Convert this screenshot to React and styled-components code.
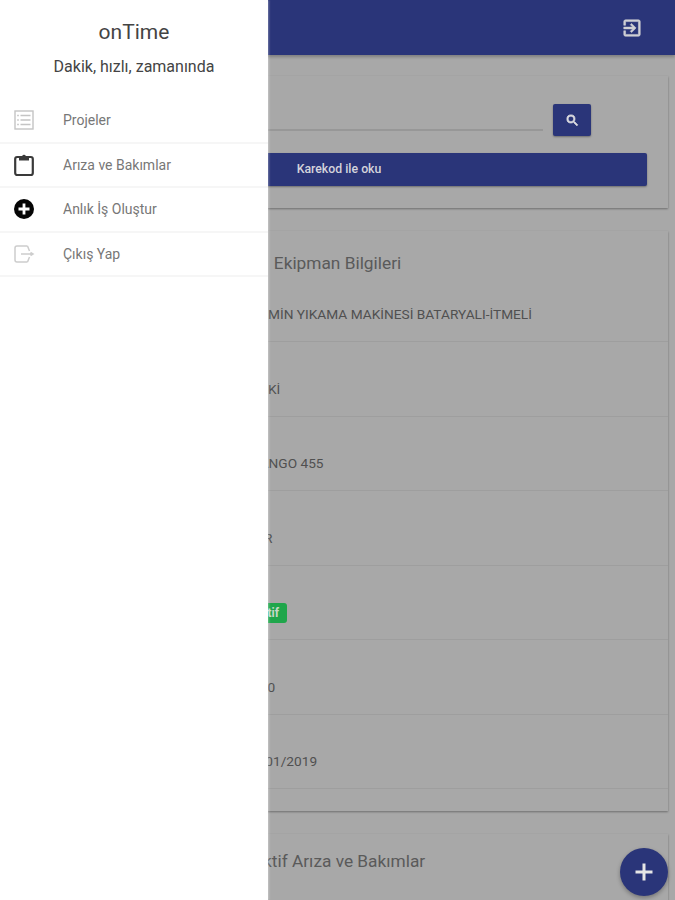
import React from 'react';
import styled, { createGlobalStyle } from 'styled-components';

const GlobalStyle = createGlobalStyle`
    html, body {
        margin: 0;
        padding: 0;
        background: #a8a8a8;
        font-family: Roboto, "Liberation Sans", sans-serif;
    }
`

const menuItems = [
    { label: 'Projeler', icon: 'list' },
    { label: 'Arıza ve Bakımlar', icon: 'clipboard' },
    { label: 'Anlık İş Oluştur', icon: 'add' },
    { label: 'Çıkış Yap', icon: 'exit' }
]

const equipmentRows = [
    { value: 'ZEMİN YIKAMA MAKİNESİ BATARYALI-İTMELİ' },
    { value: 'TEKİ' },
    { value: 'TANGO 455' },
    { value: 'MR' },
    { badge: 'Aktif' },
    { value: '200' },
    { value: '1/01/2019' }
]

const MenuIcon = ({ name }) => {
    if (name === 'list') {
        return (<svg width="22" height="22" viewBox="0 0 22 22" fill="none" stroke="#c4c4c4" strokeWidth="1.4">
            <rect x="2" y="2" width="18" height="18" />
            <path d="M7.5 6.5h10M7.5 11h10M7.5 15.5h10M4.2 6.5h1.6M4.2 11h1.6M4.2 15.5h1.6" />
        </svg>)
    }
    if (name === 'clipboard') {
        return (<svg width="22" height="24" viewBox="0 0 22 24" fill="none">
            <rect x="2.2" y="4" width="17.6" height="18" rx="2" stroke="#3a3a3a" strokeWidth="2.2" />
            <path d="M6 3h3.2a1.9 1.9 0 0 1 3.6 0H16v4.5H6z" fill="#3a3a3a" />
        </svg>)
    }
    if (name === 'add') {
        return (<svg width="22" height="22" viewBox="0 0 22 22">
            <circle cx="11" cy="11" r="10" fill="#050505" />
            <path d="M5.5 11h11M11 5.5v11" stroke="#fff" strokeWidth="2.8" />
        </svg>)
    }
    return (<svg width="22" height="22" viewBox="0 0 22 22" fill="none" stroke="#cdcdcd" strokeWidth="1.5">
        <path d="M14.5 3H4a2 2 0 0 0-2 2v12a2 2 0 0 0 2 2h10.5" />
        <path d="M14.5 3l2 5M14.5 19l2-5M8 11h11M17.5 9.5l2.5 1.5-2.5 1.5" />
    </svg>)
}

const App = () => {
    return (<Page>
        <GlobalStyle />
        <Header>
            <HeaderButton>
                <svg width="22" height="22" viewBox="0 0 24 24" fill="#d0d0d4" stroke="#d0d0d4" strokeWidth="0.6">
                    <path d="M10.09 15.59L11.5 17l5-5-5-5-1.41 1.41L12.67 11H3v2h9.67l-2.58 2.59zM19 3H5c-1.11 0-2 .9-2 2v4h2V5h14v14H5v-4H3v4c0 1.1.89 2 2 2h14c1.1 0 2-.9 2-2V5c0-1.1-.9-2-2-2z" />
                </svg>
            </HeaderButton>
        </Header>

        <Content>
            <SearchCard>
                <SearchRow>
                    <SearchInput />
                    <SearchButton>
                        <svg width="15" height="15" viewBox="0 0 24 24" fill="#dcdce0" stroke="#dcdce0" strokeWidth="1.2">
                            <path d="M15.5 14h-.79l-.28-.27A6.47 6.47 0 0 0 16 9.5 6.5 6.5 0 1 0 9.5 16c1.61 0 3.09-.59 4.23-1.57l.27.28v.79l5 4.99L20.49 19l-4.99-5zm-6 0C7.01 14 5 11.99 5 9.5S7.01 5 9.5 5 14 7.01 14 9.5 11.99 14 9.5 14z" />
                        </svg>
                    </SearchButton>
                </SearchRow>
                <QrButton>Karekod ile oku</QrButton>
            </SearchCard>

            <InfoCard>
                <CardTitle>Ekipman Bilgileri</CardTitle>
                {equipmentRows.map((row, i) => (<InfoRow key={i}>
                    {row.badge ? <Badge>{row.badge}</Badge> : row.value}
                </InfoRow>))}
            </InfoCard>

            <FaultCard>
                <FaultTitle>Aktif Arıza ve Bakımlar</FaultTitle>
            </FaultCard>
        </Content>

        <Fab>
            <svg width="24" height="24" viewBox="0 0 24 24">
                <path d="M12 3.5v17M3.5 12h17" stroke="#e6e6e6" strokeWidth="3" />
            </svg>
        </Fab>

        <Drawer>
            <DrawerTitle>onTime</DrawerTitle>
            <DrawerSubtitle>Dakik, hızlı, zamanında</DrawerSubtitle>
            <Menu>
                {menuItems.map((item) => (<MenuItem key={item.label}>
                    <IconSlot><MenuIcon name={item.icon} /></IconSlot>
                    {item.label}
                </MenuItem>))}
            </Menu>
        </Drawer>
    </Page>);
}

export default App;

const Page = styled.div`
    position: relative;
    width: 675px;
    height: 900px;
    overflow: hidden;
    background: #a8a8a8;
`

const Header = styled.header`
    height: 55px;
    background: #2a3579;
    box-shadow: 0 2px 3px rgba(0, 0, 0, 0.25);
    display: flex;
    justify-content: flex-end;
    align-items: center;
    padding-right: 32px;
`

const HeaderButton = styled.div`
    display: flex;
    margin-top: 1px;
`

const Content = styled.main`
    padding: 21px 7px 0;
    display: flex;
    flex-direction: column;
    gap: 23px;
`

const Card = styled.section`
    background: #a8a8a8;
    box-shadow: 0 1px 2px rgba(0, 0, 0, 0.35);
`

const SearchCard = styled(Card)`
    padding: 28px 21px 22px 20px;
    display: flex;
    flex-direction: column;
    gap: 17px;
`

const SearchRow = styled.div`
    display: flex;
    align-items: flex-start;
    gap: 10px;
    padding-right: 56px;
`

const SearchInput = styled.div`
    flex: 1;
    height: 25px;
    border-bottom: 2px solid #979797;
`

const SearchButton = styled.div`
    width: 38px;
    height: 32px;
    background: #2a3579;
    border-radius: 2px;
    box-shadow: 0 1px 2px rgba(0, 0, 0, 0.35);
    display: flex;
    align-items: center;
    justify-content: center;
`

const QrButton = styled.div`
    height: 33px;
    padding-left: 4px;
    padding-bottom: 2px;
    box-sizing: border-box;
    background: #2a3579;
    border-radius: 2px;
    box-shadow: 0 1px 2px rgba(0, 0, 0, 0.35);
    color: #d4d4dc;
    font-size: 12.3px;
    font-weight: 500;
    display: flex;
    align-items: center;
    justify-content: center;
`

const InfoCard = styled(Card)`
    height: 580px;
`

const FaultCard = styled(Card)`
    height: 120px;
`

const CardTitle = styled.h2`
    margin: 0;
    height: 14.5px;
    padding-top: 22px;
    text-align: center;
    font-size: 17.3px;
    line-height: 20px;
    font-weight: 400;
    color: #5a5a5a;
`

const FaultTitle = styled(CardTitle)`
    padding-top: 17px;
    padding-left: 2px;
`

const InfoRow = styled.div`
    height: 74.5px;
    box-sizing: border-box;
    padding: 0 0 18px 245px;
    border-bottom: 1px solid #9e9e9e;
    display: flex;
    align-items: flex-end;
    font-size: 13.7px;
    line-height: 18px;
    color: #505050;
`

const Badge = styled.span`
    background: #1fa64b;
    color: #c8d8c8;
    border-radius: 3px;
    font-size: 12px;
    font-weight: 700;
    line-height: 14px;
    margin: 0 0 -2px -2px;
    padding: 3px 8px 3px 3px;
`

const Fab = styled.div`
    position: absolute;
    left: 620px;
    top: 848px;
    width: 48px;
    height: 48px;
    border-radius: 50%;
    background: #2a3579;
    box-shadow: 0 2px 4px rgba(0, 0, 0, 0.3);
    display: flex;
    align-items: center;
    justify-content: center;
`

const Drawer = styled.nav`
    position: absolute;
    left: 0;
    top: 0;
    bottom: 0;
    width: 268px;
    background: #fff;
    box-shadow: 1px 0 2px rgba(255, 255, 255, 0.35);
`

const DrawerTitle = styled.div`
    margin-top: 20px;
    text-align: center;
    font-size: 21px;
    line-height: 24px;
    color: #444;
`

const DrawerSubtitle = styled.div`
    margin-top: 13px;
    text-align: center;
    font-size: 16px;
    line-height: 20px;
    color: #444;
`

const Menu = styled.div`
    margin-top: 22px;
`

const MenuItem = styled.div`
    height: 44.5px;
    box-sizing: border-box;
    border-bottom: 2px solid #f6f6f6;
    display: flex;
    align-items: center;
    font-size: 14px;
    color: #777;
`

const IconSlot = styled.span`
    width: 63px;
    padding-left: 13px;
    box-sizing: border-box;
    display: flex;
`
